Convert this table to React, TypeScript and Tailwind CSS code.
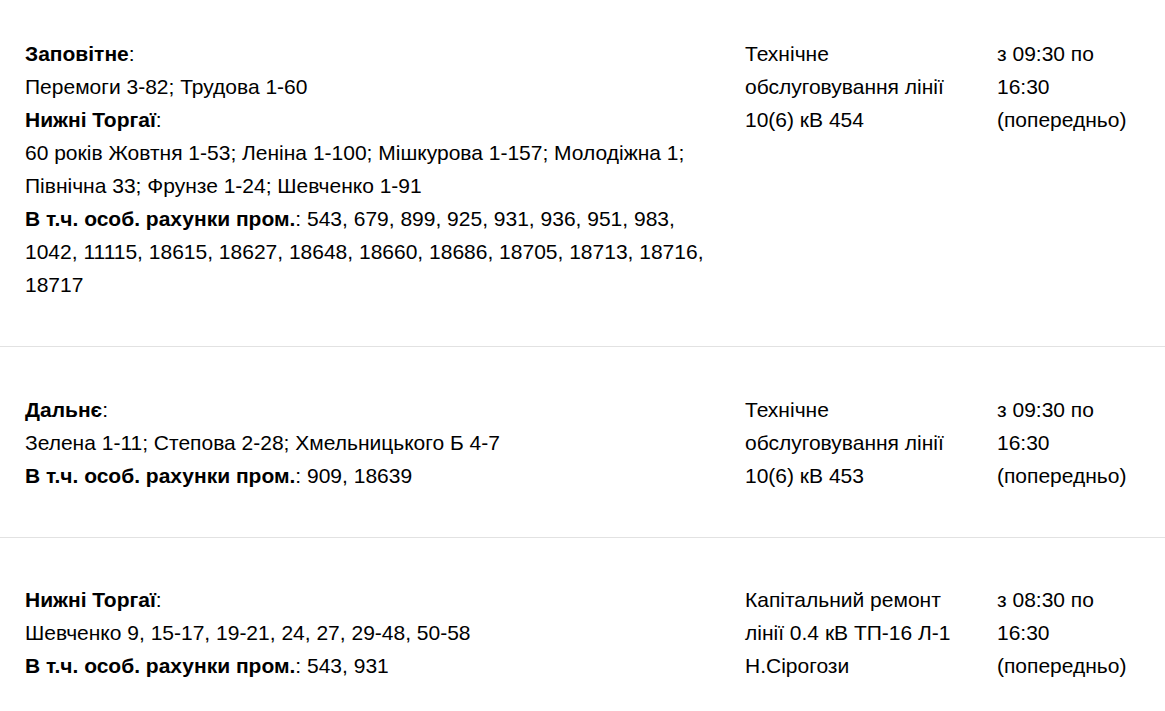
const rows = [
  {
    places: [
      { name: 'Заповітне', streets: 'Перемоги 3-82; Трудова 1-60' },
      {
        name: 'Нижні Торгаї',
        streets:
          '60 років Жовтня 1-53; Леніна 1-100; Мішкурова 1-157; Молодіжна 1; Північна 33; Фрунзе 1-24; Шевченко 1-91',
      },
    ],
    accounts:
      '543, 679, 899, 925, 931, 936, 951, 983, 1042, 11115, 18615, 18627, 18648, 18660, 18686, 18705, 18713, 18716, 18717',
    work: 'Технічне обслуговування лінії 10(6) кВ 454',
    time: 'з 09:30 по 16:30 (попередньо)',
  },
  {
    places: [{ name: 'Дальнє', streets: 'Зелена 1-11; Степова 2-28; Хмельницького Б 4-7' }],
    accounts: '909, 18639',
    work: 'Технічне обслуговування лінії 10(6) кВ 453',
    time: 'з 09:30 по 16:30 (попередньо)',
  },
  {
    places: [{ name: 'Нижні Торгаї', streets: 'Шевченко 9, 15-17, 19-21, 24, 27, 29-48, 50-58' }],
    accounts: '543, 931',
    work: 'Капітальний ремонт лінії 0.4 кВ ТП-16 Л-1 Н.Сірогози',
    time: 'з 08:30 по 16:30 (попередньо)',
  },
]

export default function App() {
  return (
    <div className="min-h-screen bg-white text-black text-[21px] leading-[33px] [font-family:'Liberation_Sans',Arial,sans-serif]">
      {rows.map((row, i) => (
        <div
          key={i}
          className={`flex pl-[25px] pb-[45px] ${
            i === 0 ? 'pt-[37px]' : i === rows.length - 1 ? 'pt-[45px]' : 'pt-[46px]'
          } ${i < rows.length - 1 ? 'border-b border-[#e2e2e2]' : ''}`}
        >
          <div className="w-[695px] shrink-0">
            {row.places.map((p) => (
              <div key={p.name}>
                <div>
                  <b>{p.name}</b>:
                </div>
                <div>{p.streets}</div>
              </div>
            ))}
            <div>
              <b>В т.ч. особ. рахунки пром.</b>: {row.accounts}
            </div>
          </div>
          <div className="ml-[25px] w-[220px] shrink-0">{row.work}</div>
          <div className="ml-[32px] w-[135px] shrink-0">{row.time}</div>
        </div>
      ))}
    </div>
  )
}
